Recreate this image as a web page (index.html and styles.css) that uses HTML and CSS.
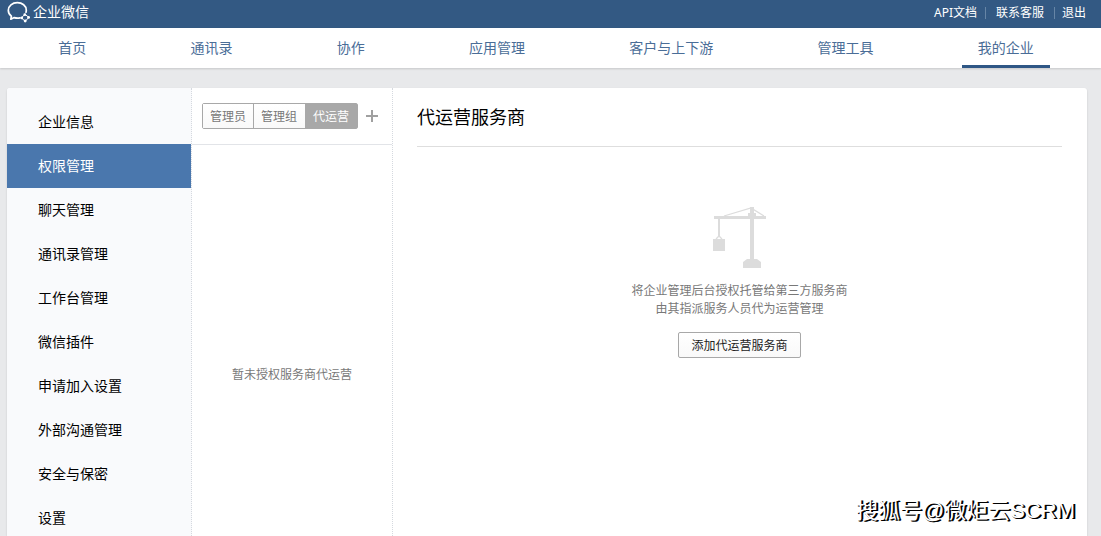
FILE: index.html
```html
<!DOCTYPE html>
<html lang="zh-CN">
<head>
<meta charset="utf-8">
<title>企业微信</title>
<link rel="stylesheet" href="styles.css">
</head>
<body>
<header class="topbar">
  <a class="brand" href="#">
    <svg class="brand-logo" viewBox="0 0 24 22" fill="none" stroke="currentColor" aria-hidden="true">
      <path stroke-width="1.7" stroke-linecap="round" stroke-linejoin="round" d="M19 11.200C19.200 10.500 19.300 10 19.300 9.200C19.300 4.700 15.200 1.700 10.300 1.700S1.300 4.900 1.300 9.300C1.300 11.800 2.500 13.800 4.400 15.200L3.800 18.200L7.200 16.600C9.300 17.200 11.200 17.200 13 16.800"/>
      <g fill="currentColor" stroke="none">
        <circle cx="17.800" cy="13.700" r="1.400"/><circle cx="21.600" cy="16.400" r="1.400"/><circle cx="18.200" cy="20" r="1.400"/><circle cx="14.800" cy="16.900" r="1.400"/>
      </g>
      <path stroke-width="1" d="M18.200 13.500L21.600 16.200M21.500 16.700L18.500 20M18 20.200L14.800 17.200M14.800 16.600L17.500 13.600"/>
    </svg>
    <span>企业微信</span>
  </a>
  <div class="toplinks">
    <a href="#">API文档</a>
    <a href="#">联系客服</a>
    <a href="#">退出</a>
  </div>
</header>
<nav class="mainnav">
  <div class="mainnav-inner">
    <a href="#">首页</a>
    <a href="#">通讯录</a>
    <a href="#">协作</a>
    <a href="#">应用管理</a>
    <a href="#">客户与上下游</a>
    <a href="#">管理工具</a>
    <a class="current" href="#" aria-current="page">我的企业</a>
  </div>
</nav>
<main class="card">
  <nav class="sidebar">
    <a href="#">企业信息</a>
    <a class="active" href="#">权限管理</a>
    <a href="#">聊天管理</a>
    <a href="#">通讯录管理</a>
    <a href="#">工作台管理</a>
    <a href="#">微信插件</a>
    <a href="#">申请加入设置</a>
    <a href="#">外部沟通管理</a>
    <a href="#">安全与保密</a>
    <a href="#">设置</a>
  </nav>
  <section class="groups">
    <div class="groups-head">
      <div class="tabs">
        <button type="button">管理员</button>
        <button type="button">管理组</button>
        <button type="button" class="selected">代运营</button>
      </div>
      <button type="button" class="add" aria-label="添加">
        <svg viewBox="0 0 12 12" aria-hidden="true"><path fill="currentColor" d="M5 0h2v5h5v2H7v5H5V7H0V5h5z"/></svg>
      </button>
    </div>
    <p class="groups-empty">暂未授权服务商代运营</p>
  </section>
  <section class="detail">
    <h1>代运营服务商</h1>
    <div class="intro">
      <svg class="crane" viewBox="0 0 54 61" aria-hidden="true">
        <g fill="#dcdcdc">
          <path d="M37 0h4v6h2v3h10v3H41v40h3l4 3v6H30v-6l4-3h3V12H7v18H5V12H1V9h34V6h2z"/>
          <path d="M0 32h12v12H0z"/>
        </g>
        <path fill="none" stroke="#dcdcdc" stroke-width="1.300" d="M11 9L38 1L51 9M3 32L6 29L9 32"/>
      </svg>
      <p>将企业管理后台授权托管给第三方服务商<br>由其指派服务人员代为运营管理</p>
      <button type="button" class="action">添加代运营服务商</button>
    </div>
  </section>
</main>
<div class="watermark">搜狐号@微炬云SCRM</div>
</body>
</html>
```
FILE: styles.css
```css
* {
  box-sizing: border-box;
}

body {
  margin: 0;
  height: 100vh;
  display: flex;
  flex-direction: column;
  overflow: hidden;
  background: #e8e9eb;
  color: #000;
  font: 14px/20px "Noto Sans", "Noto Sans CJK SC", sans-serif;
}

a {
  color: inherit;
  text-decoration: none;
}

button {
  font: inherit;
  cursor: pointer;
}

h1,
p {
  margin: 0;
}

.topbar {
  display: flex;
  justify-content: space-between;
  flex: none;
  height: 28px;
  padding: 0 15px 0 7px;
  background: #335983;
  color: #fff;
}

.brand {
  display: flex;
  gap: 2px;
  height: 24px;
  line-height: 24px;
  align-items: center;
}

.brand-logo {
  width: 24px;
  height: 22px;
}

.toplinks {
  display: flex;
  align-items: center;
  height: 26px;
  font-size: 12px;
  line-height: 12px;
}

.toplinks a + a {
  padding: 0 10px;
  border-left: 1px solid #6685a6;
}

.toplinks a:first-child {
  padding-right: 8px;
}

.toplinks a:last-child {
  padding: 0 0 0 7px;
}

.mainnav {
  flex: none;
  background: #fff;
  box-shadow: 0 1px 2px rgba(0, 0, 0, 0.15);
}

.mainnav-inner {
  display: flex;
  justify-content: space-around;
  margin: 0 15px 0 6px;
}

.mainnav a {
  padding: 0 16px;
  line-height: 40px;
  color: #4a6d97;
}

.mainnav .current {
  box-shadow: inset 0 -3px #2f5785;
}

.card {
  flex: 1;
  min-height: 0;
  display: flex;
  margin: 20px 14px 0 7px;
  background: #fff;
  border-radius: 3px 3px 0 0;
  box-shadow: 0 1px 2px rgba(0, 0, 0, 0.15);
  overflow: hidden;
}

.sidebar {
  flex: none;
  width: 185px;
  padding-top: 12px;
  background: #f9fafc;
  border-right: 1px dotted #d5d9df;
}

.sidebar a {
  display: block;
  padding-left: 31px;
  line-height: 44px;
}

.sidebar .active {
  background: #4a77ad;
  color: #fff;
}

.groups {
  flex: none;
  width: 201px;
  display: flex;
  flex-direction: column;
  border-right: 1px dotted #d5d9df;
  color: #787878;
  font-size: 12px;
}

.groups-head {
  display: flex;
  align-items: center;
  gap: 8px;
  height: 57px;
  padding: 0 10px;
  border-bottom: 1px solid #e2e4e8;
}

.tabs {
  display: flex;
  border: 1px solid #a8a8a8;
  border-radius: 2px;
}

.tabs button {
  height: 24px;
  padding: 2px 7px 0;
  border: 0;
  background: linear-gradient(#fff, #f9f9f9);
  color: #787878;
}

.tabs button + button {
  padding-right: 8px;
  border-left: 1px solid #a8a8a8;
}

.tabs button.selected {
  background: #a8a8a8;
  color: #fff;
}

.add {
  display: flex;
  padding: 0;
  border: 0;
  background: none;
  color: #a0a0a0;
}

.add svg {
  width: 12px;
  height: 12px;
}

.groups-empty {
  margin-top: 220px;
  text-align: center;
}

.detail {
  flex: 1;
  padding: 0 25px 0 24px;
}

.detail h1 {
  padding: 15px 0 14px;
  border-bottom: 1px solid #dedede;
  font-size: 18px;
  font-weight: 400;
  line-height: 29px;
}

.intro {
  display: flex;
  flex-direction: column;
  align-items: center;
  padding-top: 60px;
  color: #787878;
  font-size: 12px;
  line-height: 18px;
  text-align: center;
}

.crane {
  width: 54px;
  height: 61px;
  margin-bottom: 14px;
}

.action {
  height: 26px;
  margin-top: 14px;
  padding: 2px 12px 0;
  border: 1px solid #a8a8a8;
  border-radius: 2px;
  background: linear-gradient(#fff, #f9f9f9);
  color: #222;
}

.watermark {
  position: absolute;
  right: 26px;
  bottom: 9px;
  color: #fff;
  font: 22px/32px "Liberation Sans", "Noto Sans CJK SC", sans-serif;
  text-shadow: 1px 1px #000, 2px 1px #000;
}
```
